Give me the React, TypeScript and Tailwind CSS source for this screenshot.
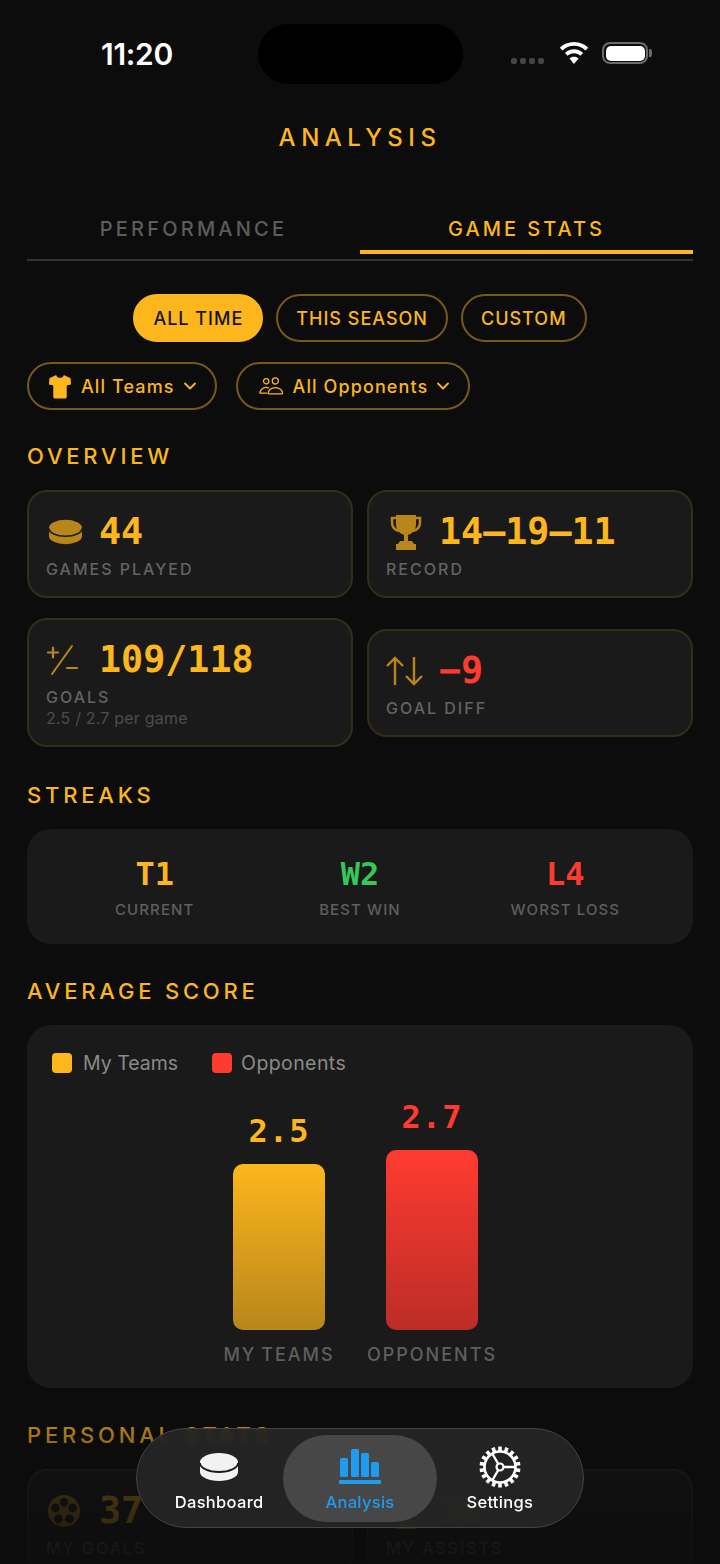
import { ChevronDown } from "lucide-react"

function Puck({ className, gap }: { className: string; gap: string }) {
  return (
    <svg viewBox="0 0 40 30" className={className}>
      <path d="M1 10A19 9 0 0 1 39 10V20A19 9 0 0 1 1 20Z" fill="currentColor" />
      <path d="M1 11A19 9 0 0 0 39 11" fill="none" stroke={gap} strokeWidth="1.800" />
    </svg>
  )
}

function Shirt() {
  return (
    <svg viewBox="0 0 24 26" className="h-[25px] w-[24px] text-[#fdb71c]">
      <path
        fill="currentColor"
        d="M8 1 1 4.500 0.500 11l4.500 1v12a1.500 1.500 0 0 0 1.500 1.500h11A1.500 1.500 0 0 0 19 24V12l4.500-1L23 4.500 16 1c-.500 2-2 3-4 3S8.500 3 8 1z"
      />
    </svg>
  )
}

function People() {
  return (
    <svg viewBox="0 0 26 18" fill="none" stroke="currentColor" strokeWidth="1.300" className="ml-[2px] h-[18px] w-[25px] text-[#fdb71c]">
      <circle cx="7.500" cy="4" r="2.800" />
      <circle cx="17" cy="3.800" r="3.200" />
      <path d="M1 16.500c0-3 2.500-6 6.500-6 1 0 1.800.200 2.500.500M1 16.500h7" strokeLinecap="round" />
      <path d="M9.500 16.800c0-3.600 3.200-6.200 7.500-6.200s7.500 2.600 7.500 6.200c0 .300-.200.500-.500.500H10c-.300 0-.500-.200-.500-.500z" />
    </svg>
  )
}

function PlusMinus() {
  return (
    <svg viewBox="0 0 32 32" fill="none" stroke="currentColor" strokeLinecap="round" className="h-[32px] w-[32px] text-[#b8861a]">
      <path d="M26 2 6 30" strokeWidth="2" />
      <path d="M2 8.500h10M7 3.500v10" strokeWidth="2.200" />
      <path d="M21 24h10" strokeWidth="2.200" />
    </svg>
  )
}

function Trophy() {
  return (
    <svg viewBox="0 0 32 36" className="h-[36px] w-[32px] text-[#b8861a]">
      <path d="M7 4H2v4c0 5 3 8 7 9M25 4h5v4c0 5-3 8-7 9" fill="none" stroke="currentColor" strokeWidth="2.500" />
      <path d="M6 1h20v9c0 6-4 11-10 11S6 16 6 10z" fill="currentColor" />
      <rect x="14" y="20" width="4" height="8" fill="currentColor" />
      <path d="M10 27h12l2 3h2v6H6v-6h2z" fill="currentColor" />
    </svg>
  )
}

function UpDown() {
  return (
    <svg viewBox="0 0 38 30" fill="none" stroke="currentColor" strokeWidth="2.400" className="h-[30px] w-[38px] text-[#b8861a]">
      <path d="M9 29V2M1 10l8-8 8 8" />
      <path d="M28 1v27M20 20l8 8 8-8" />
    </svg>
  )
}

function Ball() {
  return (
    <svg viewBox="0 0 32 32" className="ml-[2px] h-[32px] w-[32px] text-[#b8861a]">
      <circle cx="16" cy="16" r="16" fill="currentColor" />
      <circle cx="16" cy="7.500" r="4.400" fill="#1a1a1a" />
      <circle cx="24.500" cy="13" r="4.400" fill="#1a1a1a" />
      <circle cx="21.500" cy="24" r="4.400" fill="#1a1a1a" />
      <circle cx="10.500" cy="24" r="4.400" fill="#1a1a1a" />
      <circle cx="7.500" cy="13" r="4.400" fill="#1a1a1a" />
    </svg>
  )
}

function BarsIcon() {
  return (
    <svg viewBox="0 0 42 35" className="h-[35px] w-[42px] text-[#1f9bf0]">
      <g fill="currentColor">
        <rect x="1" y="9" width="8" height="19" rx="1.500" />
        <rect x="12" y="0" width="8" height="28" rx="1.500" />
        <rect x="22" y="4" width="8" height="24" rx="1.500" />
        <rect x="32" y="13" width="8" height="15" rx="1.500" />
        <rect x="0" y="31" width="42" height="4" rx="1" />
      </g>
    </svg>
  )
}

function Gear() {
  const teeth = Array.from({ length: 18 }, (_, i) => i * 20)
  return (
    <svg viewBox="0 0 42 42" fill="none" stroke="white" className="h-[42px] w-[42px]">
      {teeth.map((a) => (
        <rect key={a} x="19.200" y="0.500" width="3.600" height="5" fill="white" stroke="none" transform={`rotate(${a} 21 21)`} />
      ))}
      <circle cx="21" cy="21" r="15.500" strokeWidth="2.600" />
      <circle cx="21" cy="21" r="3.500" strokeWidth="2.200" />
      <path d="M24.500 21H36M19.300 18 13.500 8M19.300 24 13.500 34" strokeWidth="2.400" />
    </svg>
  )
}

function SectionTitle({ children, className = "" }: { children: string; className?: string }) {
  return <h2 className={`text-[22px] leading-[24px] font-medium tracking-[3.800px] text-[#fdb71c] ${className}`}>{children}</h2>
}

function Pill({ label, active }: { label: string; active?: boolean }) {
  return (
    <button
      className={`h-[48px] rounded-full border-2 px-[18px] text-[18px] font-medium tracking-[1px] ${
        active ? "border-[#fdb71c] bg-[#fdb71c] text-[#141414]" : "border-[#75591c] text-[#fdb71c]"
      }`}
    >
      {label}
    </button>
  )
}

function Dropdown({ icon, label }: { icon: React.ReactNode; label: string }) {
  return (
    <button className="flex h-[48px] items-center rounded-full border-2 border-[#75591c] pl-[19px] pr-[15px] text-[18px] font-medium tracking-[1.100px] text-[#fdb71c]">
      {icon}
      <span className="ml-[9px]">{label}</span>
      <ChevronDown size={20} strokeWidth={2.200} className="ml-[5px]" />
    </button>
  )
}

function StatCard({
  icon,
  value,
  label,
  sub,
  valueClass = "text-[#fdb71c]",
  className = "",
}: {
  icon: React.ReactNode
  value: string
  label: string
  sub?: string
  valueClass?: string
  className?: string
}) {
  return (
    <div className={`rounded-[20px] border-2 border-[#332d1a] bg-[#1a1a1a] px-[17px] pt-[18px] ${className}`}>
      <div className="flex h-[44px] items-center">
        <div className="flex w-[53px] shrink-0 items-center">{icon}</div>
        <span className={`font-['DejaVu_Sans_Mono',monospace] text-[36.700px] leading-[44px] font-bold ${valueClass}`}>{value}</span>
      </div>
      <div className="mt-[4px] text-[16px] leading-[22px] font-medium tracking-[2px] text-[#636363]">{label}</div>
      {sub && <div className="text-[16px] leading-[20px] tracking-[0.200px] text-[#4d4d4d]">{sub}</div>}
    </div>
  )
}

function Streak({ value, label, color }: { value: string; label: string; color: string }) {
  return (
    <div className="flex flex-col items-center">
      <span className={`font-['DejaVu_Sans_Mono',monospace] text-[32px] leading-[38px] font-bold ${color}`}>{value}</span>
      <span className="mt-[7px] text-[15px] leading-[20px] font-medium tracking-[1.100px] text-[#5f5f5f]">{label}</span>
    </div>
  )
}

function Bar({ value, label, height, textColor, gradient }: { value: string; label: string; height: string; textColor: string; gradient: string }) {
  return (
    <div className="flex w-[132px] flex-col items-center">
      <span className={`font-['DejaVu_Sans_Mono',monospace] text-[32px] leading-[38px] font-bold tracking-[1px] ${textColor}`}>{value}</span>
      <div className={`mt-[14px] w-[92px] rounded-[10px] bg-gradient-to-b ${height} ${gradient}`} />
      <span className="mt-[13px] text-[18px] leading-[24px] font-medium tracking-[2px] [word-spacing:-2px] whitespace-nowrap text-[#5f5f5f]">{label}</span>
    </div>
  )
}

export default function App() {
  return (
    <div className="relative h-[1564px] w-[720px] overflow-hidden bg-[#0c0c0c] pt-[24px] font-['Inter',sans-serif]">
      {/* status bar */}
      <div className="flex h-[60px] items-center">
        <span className="ml-[101px] w-[157px] text-[30px] font-semibold tracking-[-0.300px] text-white">11:20</span>
        <div className="h-[60px] w-[205px] rounded-[30px] bg-black" />
        <div className="ml-[48px] flex translate-y-[7px] gap-[3px]">
          <i className="h-[6px] w-[6px] rounded-[2px] bg-[#444]" />
          <i className="h-[6px] w-[6px] rounded-[2px] bg-[#444]" />
          <i className="h-[6px] w-[6px] rounded-[2px] bg-[#444]" />
          <i className="h-[6px] w-[6px] rounded-[2px] bg-[#444]" />
        </div>
        <svg viewBox="0 0 32 24" className="ml-[15px] h-[22px] w-[30px] -translate-y-[1px]" fill="white">
          <path d="M16 0C10 0 4.500 2.300.500 6.300l3 3C6.700 6.100 11.100 4.200 16 4.200s9.300 1.900 12.500 5.100l3-3C27.500 2.300 22 0 16 0z" />
          <path d="M16 8c-3.900 0-7.400 1.500-10 4l3 3c1.800-1.700 4.300-2.800 7-2.800s5.200 1.100 7 2.800l3-3c-2.600-2.500-6.100-4-10-4z" />
          <path d="M16 16c-1.900 0-3.600.700-4.900 1.900L16 24l4.900-6.100C19.600 16.700 17.900 16 16 16z" />
        </svg>
        <div className="ml-[13px] flex -translate-y-[1px] items-center">
          <div className="flex h-[22px] w-[46px] items-center justify-center rounded-[8px] border-2 border-[#6b6b6b]">
            <div className="h-[15px] w-[39px] rounded-[5px] bg-white" />
          </div>
          <div className="ml-[1px] h-[8px] w-[3px] rounded-r-[2px] bg-[#6b6b6b]" />
        </div>
      </div>

      <h1 className="mt-[40px] text-center text-[24px] leading-[28px] font-medium tracking-[5.500px] text-[#fdb71c]">ANALYSIS</h1>

      {/* tabs */}
      <div className="mx-[27px] mt-[63px] flex border-b-2 border-[#333]">
        <div className="h-[44px] w-[333px] text-center text-[20px] leading-[28px] font-medium tracking-[3.200px] text-[#5c5c5c]">PERFORMANCE</div>
        <div className="mb-[5px] h-[39px] w-[333px] border-b-4 border-[#fdb71c] text-center text-[20px] leading-[28px] font-medium tracking-[3px] text-[#fdb71c]">
          GAME STATS
        </div>
      </div>

      <div className="mt-[33px] flex justify-center gap-[13px]">
        <Pill label="ALL TIME" active />
        <Pill label="THIS SEASON" />
        <Pill label="CUSTOM" />
      </div>

      <div className="mx-[27px] mt-[20px] flex gap-[19px]">
        <Dropdown icon={<Shirt />} label="All Teams" />
        <Dropdown icon={<People />} label="All Opponents" />
      </div>

      <div className="mx-[27px]">
        <SectionTitle className="mt-[34px]">OVERVIEW</SectionTitle>

        <div className="mt-[22px] grid grid-cols-2 items-center gap-x-[14px] gap-y-[20px]">
          <StatCard icon={<Puck className="ml-[2px] h-[26px] w-[35px] text-[#b8861a]" gap="#1a1a1a" />} value="44" label="GAMES PLAYED" className="h-[108px]" />
          <StatCard icon={<span className="ml-[4px]"><Trophy /></span>} value="14–19–11" label="RECORD" className="h-[108px]" />
          <StatCard icon={<PlusMinus />} value="109/118" label="GOALS" sub="2.5 / 2.7 per game" className="h-[129px]" />
          <StatCard icon={<UpDown />} value="−9" valueClass="text-[#ff3b30]" label="GOAL DIFF" className="h-[108px]" />
        </div>

        <SectionTitle className="mt-[36px]">STREAKS</SectionTitle>

        <div className="mt-[22px] grid h-[115px] grid-cols-3 content-center rounded-[24px] bg-[#1a1a1a] px-[25px] pt-[2px]">
          <Streak value="T1" label="CURRENT" color="text-[#fdb71c]" />
          <Streak value="W2" label="BEST WIN" color="text-[#34c759]" />
          <Streak value="L4" label="WORST LOSS" color="text-[#ff3b30]" />
        </div>

        <SectionTitle className="mt-[35px]">AVERAGE SCORE</SectionTitle>

        <div className="mt-[22px] h-[363px] rounded-[24px] bg-[#1a1a1a] px-[25px] pt-[26px]">
          <div className="flex items-center text-[19.500px] leading-[24px] text-[#8a8a8a]">
            <i className="h-[20px] w-[20px] rounded-[4px] bg-[#fdb71c]" />
            <span className="ml-[11px]">My Teams</span>
            <i className="ml-[34px] h-[20px] w-[20px] rounded-[4px] bg-[#ff3b30]" />
            <span className="ml-[9px] tracking-[0.400px]">Opponents</span>
          </div>
          <div className="mt-[23px] flex h-[269px] items-end justify-center gap-[21px] pr-[9px]">
            <Bar value="2.5" label="MY TEAMS" height="h-[166px]" textColor="text-[#fdb71c]" gradient="from-[#fdb71c] to-[#b8861a]" />
            <Bar value="2.7" label="OPPONENTS" height="h-[180px]" textColor="text-[#ff3b30]" gradient="from-[#ff3b30] to-[#bb2d26]" />
          </div>
        </div>

        <SectionTitle className="mt-[35px]">PERSONAL STATS</SectionTitle>

        <div className="mt-[22px] grid grid-cols-2 gap-x-[14px]">
          <StatCard icon={<Ball />} value="37" label="MY GOALS" className="h-[108px]" />
          <StatCard icon={<span className="ml-[4px]"><Trophy /></span>} value="38" label="MY ASSISTS" className="h-[108px]" />
        </div>
      </div>

      {/* fade under the floating tab bar */}
      <div className="pointer-events-none absolute inset-x-0 bottom-0 h-[164px] bg-gradient-to-b from-[#0c0c0c]/10 via-[#0c0c0c]/75 to-[#0c0c0c]/90" />

      {/* floating tab bar */}
      <nav className="absolute bottom-[36px] left-[136px] flex h-[100px] w-[448px] items-center rounded-[50px] border border-[#444] bg-[#262626]/90 px-[6px] backdrop-blur-[2px]">
        <button className="flex h-[87px] w-[141px] flex-col items-center pt-[10px] pl-[12px] text-[16.500px] leading-[22px] font-medium tracking-[0.300px] text-white">
          <span className="flex h-[44px] items-center"><Puck className="h-[30px] w-[40px] text-[#f2f2f2]" gap="#1c1c1c" /></span>
          <span className="mt-[2px]">Dashboard</span>
        </button>
        <button className="flex h-[87px] w-[154px] flex-col items-center rounded-[44px] bg-[#474747] pt-[10px] text-[16.500px] leading-[22px] font-medium tracking-[0.300px] text-[#1f9bf0]">
          <span className="flex h-[44px] items-center"><BarsIcon /></span>
          <span className="mt-[2px]">Analysis</span>
        </button>
        <button className="flex h-[87px] w-[141px] flex-col items-center pt-[10px] pr-[14px] text-[16.500px] leading-[22px] font-medium tracking-[0.300px] text-white">
          <span className="flex h-[44px] items-center"><Gear /></span>
          <span className="mt-[2px]">Settings</span>
        </button>
      </nav>
    </div>
  )
}
